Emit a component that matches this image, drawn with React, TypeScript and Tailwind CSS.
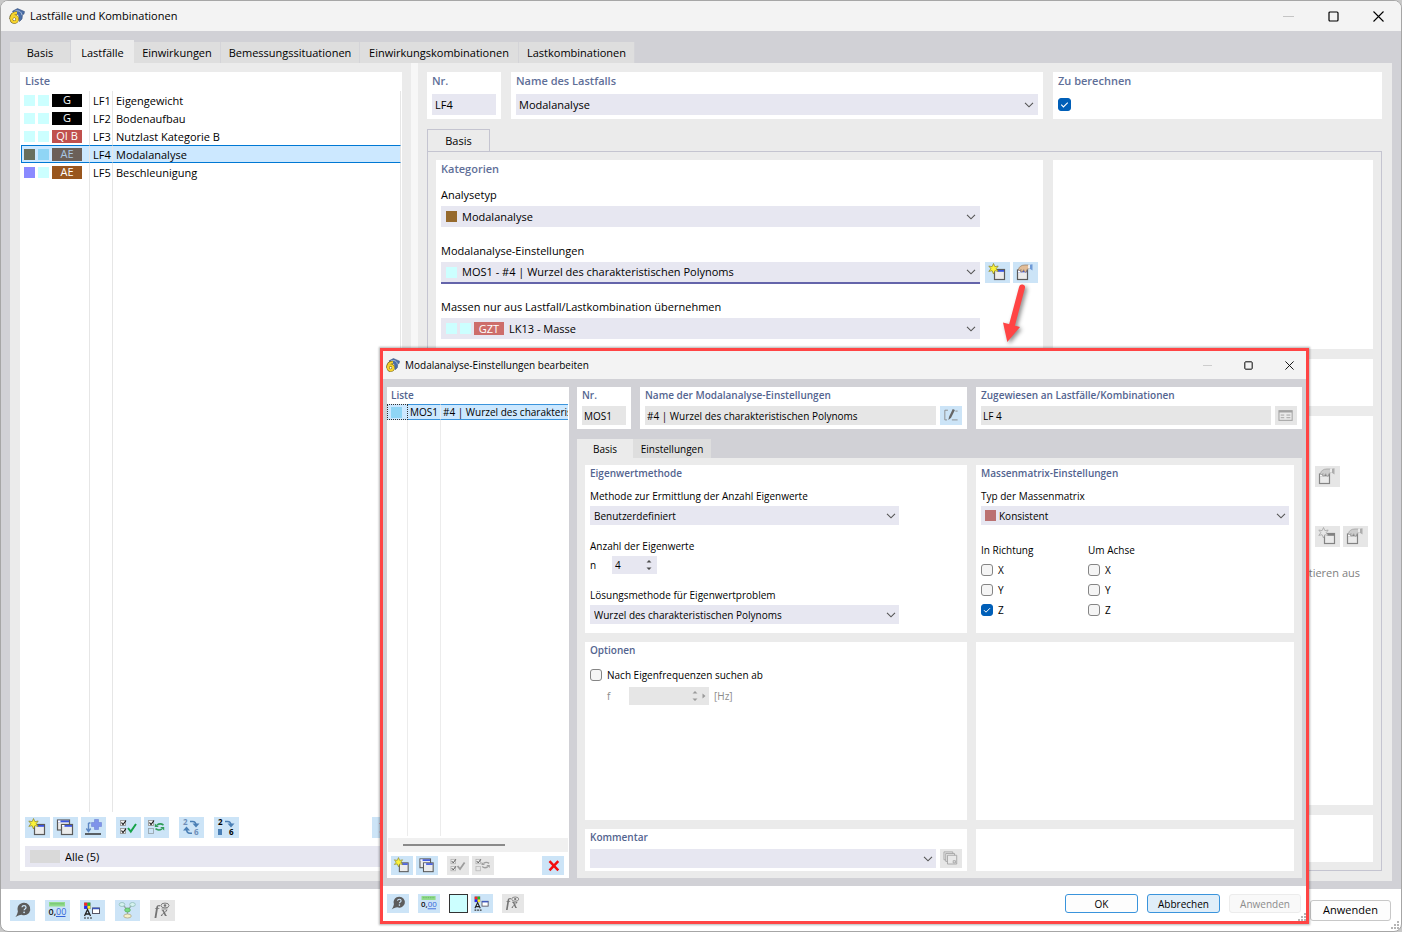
import React, { useState } from 'react';
import clsx from 'clsx';

type IconProps = { className?: string };

const ICON = 'block h-full w-full';

/* ---------- icons ---------- */

function AppLogo({ className }: IconProps) {
  return (
    <svg viewBox="0 0 16 16" className={className} aria-hidden="true">
      <path d="M3.500 3.200 8.500.6l7 3-.6 2.600-1.400.2-.5 4.600-2.500 2.500L9.500 6.500 5 5.500z" fill="#4a6ea8" stroke="#39507a" strokeWidth=".6" />
      <path d="M5.500 3.400c3.500-1.400 7-.2 7.500 3.800" fill="none" stroke="#b9c9e2" strokeWidth=".9" />
      <path d="M8 4.800C4 5 1.900 7.300 1.900 11" fill="none" stroke="#6b5c14" strokeWidth="3.200" />
      <circle cx="5.300" cy="11.200" r="2.900" fill="#fff" stroke="#6b5c14" strokeWidth="3.400" />
      <path d="M8 4.800C4 5 2.200 7.300 2.200 11" fill="none" stroke="#f6d32d" strokeWidth="2.200" />
      <circle cx="5.300" cy="11.200" r="2.900" fill="none" stroke="#f6d32d" strokeWidth="2.400" />
    </svg>
  );
}

function MiniWindow({ x, y, w = 10, h = 10 }: { x: number; y: number; w?: number; h?: number }) {
  return (
    <g>
      <rect x={x} y={y} width={w} height={h} fill="#ececec" stroke="#5a5a5a" strokeWidth="1.200" />
      <rect x={x + 0.5} y={y + 0.5} width={w - 1} height="1.800" fill="#3a55e0" />
      <rect x={x + 0.5} y={y + 0.5} width="2.500" height="1.800" fill="#fff" />
    </g>
  );
}

function NewIcon() {
  return (
    <svg viewBox="0 0 25 21" className={ICON} aria-hidden="true">
      <MiniWindow x={9.5} y={7.5} />
      <path d="M8.500 1.500 9.900 4.700 13.200 4 11.200 6.700 13.200 9.400 9.900 8.700 8.500 12 7.100 8.700 3.800 9.400 5.800 6.700 3.800 4 7.100 4.700z" fill="#fbf33a" stroke="#8a8328" strokeWidth=".7" />
    </svg>
  );
}

function CopyIcon() {
  return (
    <svg viewBox="0 0 25 21" className={ICON} aria-hidden="true">
      <MiniWindow x={4.5} y={3} w={12} />
      <MiniWindow x={8.5} y={7.5} w={11} />
    </svg>
  );
}

function ImportIcon() {
  return (
    <svg viewBox="0 0 25 21" className={ICON} aria-hidden="true">
      <path d="M13.500 2.500h4v3h3v4h-3v3h-4v-3h-3v-4h3z" fill="#7f93ea" stroke="#6277cf" strokeWidth=".5" />
      <path d="M7.500 6v8M5.300 11.500l2.200 3 2.200-3M7.500 6h2" fill="none" stroke="#5b86c4" strokeWidth="1.400" />
      <path d="M4 17h16" stroke="#333" strokeWidth="1.600" />
    </svg>
  );
}

function SmallBox({ y, checked = true }: { y: number; checked?: boolean }) {
  return (
    <g fill="none">
      <rect x="4.500" y={y} width="5" height="5" stroke={checked ? '#999' : '#9aa7b0'} fill={checked ? '#f4f4f4' : 'none'} strokeWidth=".9" />
      {checked && <path d={`M5.500 ${y + 2}l1.500 2 3-4`} stroke="#111" strokeWidth="1.100" />}
    </g>
  );
}

function CheckAllIcon() {
  return (
    <svg viewBox="0 0 25 21" className={ICON} aria-hidden="true">
      <SmallBox y={3.5} />
      <SmallBox y={11.5} />
      <path d="M12 11l2.800 3.500L20 7" fill="none" stroke="#17a34a" strokeWidth="2" />
    </svg>
  );
}

function InvertIcon() {
  return (
    <svg viewBox="0 0 25 21" className={ICON} aria-hidden="true">
      <SmallBox y={3.5} />
      <SmallBox y={11.5} checked={false} />
      <path d="M19.500 8c-2.500-1.600-4.800-1.200-6.500.2M11.500 11.700c2 1.600 4.500 1.500 6.500.1" fill="none" stroke="#2f9d58" strokeWidth="1.600" />
      <path d="M10.800 6.600v3.400h4zM20.200 13.400v-3.400h-4z" fill="#2f9d58" />
    </svg>
  );
}

function RenumberIcon({ single = false }: { single?: boolean }) {
  const ink = single ? '#000' : '#6f8fb8';
  return (
    <svg viewBox="0 0 25 21" className={ICON} aria-hidden="true">
      <text x="4" y="8" fontSize="8" fontWeight="700" fill={ink} fontFamily="Open Sans, sans-serif">2</text>
      <text x="15" y="18" fontSize="8" fontWeight="700" fill={ink} fontFamily="Open Sans, sans-serif">6</text>
      <path d="M11 4.500h2.500c2 0 3.500 1 3.500 4" fill="none" stroke="#4a7fb5" strokeWidth="1.500" />
      <path d="M13.500 6.500h7L17 10.500z" fill="#4a7fb5" />
      {single ? (
        <rect x="4" y="12" width="4" height="6" fill="#4a7fb5" />
      ) : (
        <>
          <path d="M7.500 12c0 3 1.500 4.200 3.500 4.200h2" fill="none" stroke="#4a7fb5" strokeWidth="1.500" />
          <path d="M4 13.500h7L7.500 9.500z" fill="#4a7fb5" />
        </>
      )}
    </svg>
  );
}

function HelpIcon() {
  return (
    <svg viewBox="0 0 25 21" className={ICON} aria-hidden="true">
      <path d="M14 2.800a6.200 6.200 0 1 1-2.300 11.900C9.500 15 7.500 15.800 5.300 17.200c1.300-1.700 2.200-3.400 2.600-6A6.200 6.200 0 0 1 14 2.800z" fill="#5c5c5c" />
      <path d="M12 7.300c.2-2.200 4-2.200 4 .1 0 1.500-1.900 1.500-1.900 2.900" fill="none" stroke="#cce4f7" strokeWidth="1.300" />
      <circle cx="14.100" cy="12.300" r=".9" fill="#cce4f7" />
    </svg>
  );
}

function DecimalsIcon() {
  return (
    <svg viewBox="0 0 25 21" className={ICON} aria-hidden="true">
      <rect x="4" y="2" width="16" height="4.500" fill="#92dc8c" />
      <path d="M6 3v1.500M8 3v1.500M10 3v1.500M12 3v1.500M14 3v1.500M16 3v1.500M18 3v1.500" stroke="#5aa85a" strokeWidth=".7" />
      <text x="3.500" y="15" fontSize="9" fontWeight="600" fill="#111" fontFamily="Open Sans, sans-serif">0,</text>
      <text x="11" y="15" fontSize="9" fill="#3564d8" fontFamily="Open Sans, sans-serif">00</text>
      <path d="M11 16.500h9.500" stroke="#3564d8" strokeWidth="1" />
    </svg>
  );
}

function DisplayIcon() {
  return (
    <svg viewBox="0 0 25 21" className={ICON} aria-hidden="true">
      <path d="M4 2.500h6.500V9H4z" fill="#777" />
      <path d="M4.300 2.800h2.900v2.800H4.300z" fill="#f22" />
      <path d="M7.600 2.800h2.600v2.800H7.600z" fill="#2b2" />
      <path d="M4.300 6h2.900v2.700H4.300z" fill="#22f" />
      <path d="M7.600 6h2.600v2.700H7.600z" fill="#fe2" />
      <path d="M4.500 16 7.500 9.500l3 6.500M5.500 14h4" fill="none" stroke="#222" strokeWidth="1.300" />
      <path d="M4 18h8" stroke="#333" strokeWidth="1.200" strokeDasharray="2 1" />
      <rect x="12.500" y="8" width="7" height="5.500" fill="#fff" stroke="#556" strokeWidth="1" />
      <path d="M12.500 8.500h7" stroke="#3a55c0" strokeWidth="1.500" />
    </svg>
  );
}

function TreeIcon() {
  return (
    <svg viewBox="0 0 25 21" className={ICON} aria-hidden="true">
      <path d="M8 5l4.500 5L17 5M12.500 10v6" fill="none" stroke="#98a8a8" strokeWidth="1.300" />
      <ellipse cx="7" cy="4.500" rx="2.800" ry="2" fill="#d4f2ee" stroke="#8fbcb8" strokeWidth=".8" />
      <ellipse cx="17.500" cy="4.500" rx="2.800" ry="2" fill="#d4f2ee" stroke="#8fbcb8" strokeWidth=".8" />
      <ellipse cx="12.500" cy="10" rx="2.800" ry="2" fill="#79dd83" stroke="#5cae64" strokeWidth=".8" />
      <ellipse cx="12.500" cy="16" rx="3.800" ry="2" fill="#f5f0c8" stroke="#a9a688" strokeWidth=".8" />
    </svg>
  );
}

function FormulaIcon() {
  return (
    <svg viewBox="0 0 25 21" className={ICON} aria-hidden="true">
      <text x="4.500" y="15" fontSize="14" fontStyle="italic" fontWeight="700" fill="#444" fontFamily="Liberation Serif, serif">f</text>
      <text x="11" y="16" fontSize="13" fontStyle="italic" fontWeight="700" fill="#444" fontFamily="Liberation Serif, serif">x</text>
      <ellipse cx="15" cy="5.500" rx="4" ry="2.400" fill="none" stroke="#444" strokeWidth=".9" />
      <circle cx="15" cy="5.500" r="1.300" fill="#444" />
      <path d="M11.500 9h6" stroke="#444" strokeWidth=".8" />
    </svg>
  );
}

function EditWindowIcon() {
  return (
    <svg viewBox="0 0 25 21" className={ICON} aria-hidden="true">
      <MiniWindow x={4.5} y={8} w={10} h={9.5} />
      <path d="M5.500 7.500C6 4.500 8.500 3 12 3h3.500l.8 3.500-2 .6-1.300 3.200-1.500-.6-.8-2-1.500 2.300-1.500-.4L8 7.500 6.500 9z" fill="#e2bd98" stroke="#8f7760" strokeWidth=".7" />
      <path d="M16.500 2.800 19.500 2.200v6.200l-3-2z" fill="#6f9ad6" />
      <path d="M15.200 3h1.600v3.600h-1.600z" fill="#fff" />
    </svg>
  );
}

function RenameIcon() {
  return (
    <svg viewBox="0 0 25 21" className={ICON} aria-hidden="true">
      <path d="M9 4.500H5.500v11H8M13.500 15.500H20M17.500 5.500H20" fill="none" stroke="#888" strokeWidth="1" />
      <path d="M9.500 15.500l.8-3.500L14.500 3l2.500 1.200L12.600 13z" fill="#666" />
    </svg>
  );
}

function DetailsIcon() {
  return (
    <svg viewBox="0 0 25 21" className={ICON} aria-hidden="true">
      <rect x="4.500" y="5" width="15" height="11" fill="#ececec" stroke="#888" strokeWidth="1.200" />
      <path d="M4.500 6h15" stroke="#888" strokeWidth="2.200" />
      <path d="M6.500 10h4M6.500 13h4M13 10h4.500M13 13h4.500" stroke="#888" strokeWidth="1.100" />
    </svg>
  );
}

function StackIcon() {
  return (
    <svg viewBox="0 0 25 21" className={ICON} aria-hidden="true">
      <g fill="#e9e9e9" stroke="#888" strokeWidth="1">
        <path d="M4.500 3h10v9h-10z" />
        <path d="M6.500 4.800h10v9h-10z" />
        <path d="M8.500 6.800h10.500v10H8.500z" />
        <path d="M15 13h2.500v2.500H15z" />
      </g>
    </svg>
  );
}

function DeleteIcon() {
  return (
    <svg viewBox="0 0 25 21" className={ICON} aria-hidden="true">
      <path d="M8.500 5.500l10 10.500M18.500 5.500L8.500 16" stroke="#f40d0d" strokeWidth="2.800" />
    </svg>
  );
}

/* ---------- controls ---------- */

interface IconButtonProps {
  label: string;
  children: React.ReactNode;
  disabled?: boolean;
  small?: boolean;
  className?: string;
}

function IconButton({ label, children, disabled, small, className }: IconButtonProps) {
  return (
    <button
      type="button"
      aria-label={label}
      disabled={disabled}
      className={clsx(
        'shrink-0',
        small ? 'h-[19px] w-[22px]' : 'h-[21px] w-[25px]',
        disabled ? 'bg-[#e6e6e6]' : 'bg-[#cce4f7] hover:bg-[#b5d8f3]',
        className
      )}
    >
      <span className={clsx('block h-full w-full', disabled && 'opacity-70 grayscale')}>{children}</span>
    </button>
  );
}

function Chevron() {
  return (
    <svg viewBox="0 0 10 6" className="pointer-events-none h-1.5 w-2.5 shrink-0" aria-hidden="true">
      <path d="M1 .8l4 4 4-4" fill="none" stroke="#555" strokeWidth="1.100" />
    </svg>
  );
}

interface SelectBoxProps {
  id: string;
  value: string;
  label?: string;
  small?: boolean;
  active?: boolean;
  children?: React.ReactNode;
  className?: string;
}

function SelectBox({ id, value, label, small, active, children, className }: SelectBoxProps) {
  return (
    <div
      className={clsx(
        'flex items-center bg-[#e7e7f1]',
        small ? 'h-[19px] pr-[3px] pl-1' : 'pr-1',
        !small && (children ? 'pl-[5px]' : 'pl-[3px]'),
        !small && (active ? 'h-[22px] border-b-2 border-[#6464aa]' : 'h-[21px]'),
        children && 'gap-[3px]',
        className
      )}
    >
      {children}
      <select
        id={id}
        aria-label={label}
        className={clsx('h-full min-w-0 flex-1 appearance-none bg-transparent outline-none', children && !small && 'pl-0.5')}
      >
        <option>{value}</option>
      </select>
      <Chevron />
    </div>
  );
}

function CheckBox({ id, checked = false, small, label }: { id: string; checked?: boolean; small?: boolean; label?: string }) {
  const [on, setOn] = useState(checked);
  return (
    <span className={clsx('grid shrink-0', small ? 'size-3' : 'size-[13px]')}>
      <input
        id={id}
        type="checkbox"
        aria-label={label}
        checked={on}
        onChange={() => setOn(!on)}
        className={clsx(
          'col-start-1 row-start-1 size-full appearance-none rounded-[3px] border',
          on ? 'border-[#005fb8] bg-[#005fb8]' : 'border-[#858585] bg-[#f5f5f5]'
        )}
      />
      {on && (
        <svg viewBox="0 0 12 12" className="pointer-events-none col-start-1 row-start-1 size-full" aria-hidden="true">
          <path d="M3 6.200l2 2 4-4" fill="none" stroke="#fff" strokeWidth="1" />
        </svg>
      )}
    </span>
  );
}

function Swatch({ className }: IconProps) {
  return <span className={clsx('block size-[11px] shrink-0', className)} />;
}

function Spinner({ disabled, more }: { disabled?: boolean; more?: boolean }) {
  return (
    <svg viewBox="0 0 16 16" className={clsx('h-4 w-4 shrink-0', more ? 'mr-0.5' : '-mr-1')} aria-hidden="true">
      <path d="M1.500 5.500h5L4 3zM1.500 10.500h5L4 13z" fill={disabled ? '#9a9a9a' : '#4a4a4a'} />
      {more && <path d="M11.500 5.500v5l3-2.500z" fill="#9a9a9a" />}
    </svg>
  );
}

function Card({ title, small, children, className }: { title?: string; small?: boolean; children?: React.ReactNode; className?: string }) {
  return (
    <section className={clsx('min-w-0 bg-white px-[5px]', className)}>
      {title && (
        <h2
          className={clsx(
            'whitespace-nowrap',
            small ? 'h-[17px] leading-4 font-[560] text-[#53648f]' : 'h-[18px] leading-[18px] font-semibold text-[#5f6f98]'
          )}
        >
          {title}
        </h2>
      )}
      {children}
    </section>
  );
}

function WindowTitle({ title, small }: { title: string; small?: boolean }) {
  const btn = clsx('grid h-full place-items-center', small ? 'w-8' : 'w-9');
  const size = small ? 'size-[9px]' : 'size-[11px]';
  return (
    <header className={clsx('flex shrink-0 items-center bg-[#f3f3f3]', small ? 'h-7 pr-px pl-[3px]' : 'h-[30px] pr-[5px] pl-2')}>
      <AppLogo className={small ? 'mr-[5px] size-3.5' : 'mr-[5px] size-4'} />
      <h1 className="flex-1">{title}</h1>
      <div className="flex h-full gap-[9px]">
        <button type="button" aria-label="Minimieren" className={btn}>
          <svg viewBox="0 0 11 11" className={size}>
            <path d="M0 5.500h11" stroke="#c4c4c4" />
          </svg>
        </button>
        <button type="button" aria-label="Maximieren" className={btn}>
          <svg viewBox="0 0 11 11" className={size}>
            <rect x="1" y="1" width="9" height="9" rx="1" fill="none" stroke="#000" strokeWidth="1.200" />
          </svg>
        </button>
        <button type="button" aria-label="Schließen" className={btn}>
          <svg viewBox="0 0 11 11" className={size}>
            <path d="M.5.5l10 10M10.500.5l-10 10" stroke="#000" strokeWidth="1.100" />
          </svg>
        </button>
      </div>
    </header>
  );
}

function ResizeGrip({ className }: IconProps) {
  return (
    <svg viewBox="0 0 8 8" className={clsx('size-2', className)} aria-hidden="true">
      <path d="M6 0h2v2H6zM3 3h2v2H3zM6 3h2v2H6zM0 6h2v2H0zM3 6h2v2H3zM6 6h2v2H6z" fill="#b5b5b5" />
    </svg>
  );
}

/* ---------- load case list ---------- */

const loadCases = [
  { no: 'LF1', name: 'Eigengewicht', badge: 'G', a: 'bg-[#ccffff]', b: 'bg-[#ccffff]', tag: 'bg-black text-white' },
  { no: 'LF2', name: 'Bodenaufbau', badge: 'G', a: 'bg-[#ccffff]', b: 'bg-[#ccffff]', tag: 'bg-black text-white' },
  { no: 'LF3', name: 'Nutzlast Kategorie B', badge: 'QI B', a: 'bg-[#ccffff]', b: 'bg-[#ccffff]', tag: 'bg-[#c0504d] text-white' },
  { no: 'LF4', name: 'Modalanalyse', badge: 'AE', a: 'bg-[#686f5e]', b: 'bg-[#8fd5f5]', tag: 'bg-[#6b5f58] text-[#a9c8e4]', selected: true },
  { no: 'LF5', name: 'Beschleunigung', badge: 'AE', a: 'bg-[#8a8aff]', b: 'bg-[#ccffff]', tag: 'bg-[#99561e] text-white' },
];

function LoadCaseList() {
  return (
    <section className="flex w-[382px] shrink-0 flex-col bg-white">
      <h2 className="h-[19px] pl-[5px] leading-[18px] font-semibold text-[#5f6f98]">Liste</h2>
      <div className="min-h-0 flex-1 pr-px pl-px">
        <table className="h-full w-full table-fixed border-separate border-spacing-0">
          <colgroup>
            <col className="w-[69px]" />
            <col className="w-[23px]" />
            <col />
          </colgroup>
          <tbody>
            {loadCases.map((lc) => {
              const cell = lc.selected
                ? 'border-y border-y-[#0078d4] bg-[#cce8ff] border-r border-r-[#e6e6e6]'
                : 'border-r border-r-[#e6e6e6]';
              return (
                <tr key={lc.no} className="h-[18px]">
                  <td className={clsx('h-[18px] p-0', cell, lc.selected ? 'border-l border-l-[#0078d4] pl-0.5' : 'pl-[3px]')}>
                    <div className="flex items-center gap-[3px]">
                      <Swatch className={lc.a} />
                      <Swatch className={lc.b} />
                      <span className={clsx('h-[13px] w-[30px] text-center leading-3', lc.tag)}>{lc.badge}</span>
                    </div>
                  </td>
                  <td className={clsx('h-[18px] p-0 pl-[3px]', cell)}>
                    <span className="block h-4 pt-px">{lc.no}</span>
                  </td>
                  <td className={clsx('h-[18px] p-0 pl-[3px]', cell)}>
                    <span className="block h-4 pt-px">{lc.name}</span>
                  </td>
                </tr>
              );
            })}
            <tr>
              <td className="border-r border-[#e6e6e6]" />
              <td className="border-r border-[#e6e6e6]" />
              <td className="border-r border-[#e6e6e6]" />
            </tr>
          </tbody>
        </table>
      </div>
      <div className="mt-[5px] flex gap-[3px] px-[5px]">
        <IconButton label="Neu"><NewIcon /></IconButton>
        <IconButton label="Kopieren"><CopyIcon /></IconButton>
        <IconButton label="Importieren"><ImportIcon /></IconButton>
        <IconButton label="Alle auswählen" className="ml-[7px]"><CheckAllIcon /></IconButton>
        <IconButton label="Auswahl umkehren"><InvertIcon /></IconButton>
        <IconButton label="Neu nummerieren" className="ml-[7px]"><RenumberIcon /></IconButton>
        <IconButton label="Nummer zuweisen" className="ml-[7px]"><RenumberIcon single /></IconButton>
        <IconButton label="Löschen" className="ml-auto"><DeleteIcon /></IconButton>
      </div>
      <SelectBox id="filter" value="Alle (5)" label="Filter" className="mx-[5px] mt-2 mb-1">
        <span className="h-[13px] w-[30px] bg-[#d9d9d9]" />
      </SelectBox>
    </section>
  );
}

/* ---------- main window ---------- */

const mainTabs = [
  { name: 'Basis', width: 'w-[61px]' },
  { name: 'Lastfälle', width: 'w-[63px]' },
  { name: 'Einwirkungen', width: 'w-[87px]' },
  { name: 'Bemessungssituationen', width: 'w-[139px]' },
  { name: 'Einwirkungskombinationen', width: 'w-[159px]' },
  { name: 'Lastkombinationen', width: 'w-[116px]' },
];

function LoadCaseDetails() {
  return (
    <div className="flex min-w-0 flex-1 flex-col">
      <div className="grid grid-cols-[74px_532fr_329fr] gap-2.5">
        <Card title="Nr." className="pb-1">
          <input aria-label="Nr." readOnly defaultValue="LF4" className="mt-1 block h-[21px] w-full bg-[#e7e7f1] px-[3px]" />
        </Card>
        <Card title="Name des Lastfalls" className="pb-1">
          <SelectBox id="case-name" label="Name des Lastfalls" value="Modalanalyse" className="mt-1" />
        </Card>
        <Card title="Zu berechnen">
          <div className="mt-2">
            <CheckBox id="calc" checked label="Zu berechnen" />
          </div>
        </Card>
      </div>

      <div role="tablist" className="mt-2.5 flex">
        <button type="button" role="tab" aria-selected="true" className="-mb-px h-[23px] w-[63px] border border-b-0 border-[#c4c4d0] bg-[#ebebeb]">
          Basis
        </button>
      </div>
      <div className="grid min-h-0 flex-1 grid-cols-[607fr_320fr] grid-rows-[189px_47px_minmax(0,1fr)_47px] gap-2.5 border border-[#c4c4d0] p-2">
        <Card title="Kategorien">
          <label htmlFor="analysis-type" className="mt-[9px] block h-4 leading-4">Analysetyp</label>
          <SelectBox id="analysis-type" value="Modalanalyse" className="mt-[3px] mr-[58px]">
            <Swatch className="bg-[#966a2d]" />
          </SelectBox>
          <label htmlFor="modal-settings" className="mt-4 block h-4 leading-4">Modalanalyse-Einstellungen</label>
          <div className="mt-[3px] flex items-start">
            <SelectBox id="modal-settings" value="MOS1 - #4 | Wurzel des charakteristischen Polynoms" active className="mr-[5px] flex-1">
              <Swatch className="bg-[#ccffff]" />
            </SelectBox>
            <IconButton label="Neue Einstellungen" className="mr-[3px]"><NewIcon /></IconButton>
            <IconButton label="Einstellungen bearbeiten"><EditWindowIcon /></IconButton>
          </div>
          <label htmlFor="mass-source" className="mt-[15px] block h-4 leading-4">Massen nur aus Lastfall/Lastkombination übernehmen</label>
          <SelectBox id="mass-source" value="LK13 - Masse" className="mt-[3px] mr-[58px]">
            <Swatch className="bg-[#ccffff]" />
            <Swatch className="bg-[#ccffff]" />
            <span className="h-[13px] w-[30px] bg-[#cd6d6a] text-center leading-[13px] text-white">GZT</span>
          </SelectBox>
        </Card>
        <Card />
        <Card />
        <Card />
        <Card />
        <Card className="flex flex-col items-end">
          <IconButton label="Bearbeiten" disabled className="mt-[50px] mr-7"><EditWindowIcon /></IconButton>
          <div className="mt-[39px] flex gap-[3px]">
            <IconButton label="Neu" disabled><NewIcon /></IconButton>
            <IconButton label="Bearbeiten" disabled><EditWindowIcon /></IconButton>
          </div>
          <p className="mt-[18px] mr-2 text-[#808080]">tieren aus</p>
        </Card>
        <Card />
        <Card />
      </div>
    </div>
  );
}

/* ---------- settings dialog ---------- */

function SettingsList() {
  const line = 'border-r border-r-[#ececec]';
  return (
    <section className="flex w-[182px] shrink-0 flex-col bg-white">
      <h2 className="h-[17px] pl-1 leading-4 font-[560] text-[#53648f]">Liste</h2>
      <div className="min-h-0 flex-1 pr-px">
        <table className="h-full w-full table-fixed border-separate border-spacing-0">
          <colgroup>
            <col className="w-[21px]" />
            <col className="w-[33px]" />
            <col />
          </colgroup>
          <tbody>
            <tr className="h-4">
              <td className="h-4 border border-dotted border-[#333] bg-[#cce8ff] p-0 pl-[3px]">
                <Swatch className="bg-[#8fd5f5]" />
              </td>
              <td className={clsx('h-4 border-y border-y-[#3a94dc] bg-[#cce8ff] p-0 pl-0.5 leading-[14px]', line)}>MOS1</td>
              <td className="h-4 overflow-hidden border-y border-y-[#3a94dc] bg-[#cce8ff] p-0 pl-0.5 leading-[14px] whitespace-nowrap">
                #4 | Wurzel des charakteristischen Polynoms
              </td>
            </tr>
            <tr>
              <td className={line} />
              <td className={line} />
              <td />
            </tr>
          </tbody>
        </table>
      </div>
      <div className="mx-px mt-0.5 h-3.5 bg-[#f0f0f0] pt-1.5">
        <div className="ml-[15px] h-0.5 w-[102px] bg-[#8a8a8a]" />
      </div>
      <div className="flex gap-[3px] pt-1 pr-[5px] pb-[3px] pl-1">
        <IconButton small label="Neu"><NewIcon /></IconButton>
        <IconButton small label="Kopieren"><CopyIcon /></IconButton>
        <IconButton small label="Alle auswählen" disabled className="ml-1.5"><CheckAllIcon /></IconButton>
        <IconButton small label="Auswahl umkehren" disabled><InvertIcon /></IconButton>
        <IconButton small label="Löschen" className="ml-auto"><DeleteIcon /></IconButton>
      </div>
    </section>
  );
}

function AxisChecks({ title, group, checked }: { title: string; group: string; checked?: string }) {
  return (
    <fieldset className="w-[107px]">
      <legend className="h-4 leading-4">{title}</legend>
      {['X', 'Y', 'Z'].map((axis) => (
        <div key={axis} className="flex h-5 items-center gap-[5px] first-of-type:mt-0.5">
          <CheckBox small id={`${group}-${axis}`} checked={axis === checked} />
          <label htmlFor={`${group}-${axis}`}>{axis}</label>
        </div>
      ))}
    </fieldset>
  );
}

function SettingsDialog() {
  const [tab, setTab] = useState('Basis');
  return (
    <div
      role="dialog"
      aria-label="Modalanalyse-Einstellungen bearbeiten"
      className="absolute top-[347px] right-[92px] bottom-[7px] left-[379px] flex flex-col border-[3px] border-[#ff4444] bg-white text-[10px] shadow-[0_0_2px_1px_rgba(0,0,0,0.3)]"
    >
      <WindowTitle small title="Modalanalyse-Einstellungen bearbeiten" />
      <div className="flex min-h-0 flex-1 gap-2 bg-[#d1d1d6] pt-2 pr-1 pb-2 pl-1">
        <SettingsList />
        <div className="flex min-w-0 flex-1 flex-col">
          <div className="grid grid-cols-[54px_327fr_326fr] gap-[9px]">
            <Card small title="Nr." className="pb-1">
              <input aria-label="Nr." readOnly defaultValue="MOS1" className="mt-0.5 block h-[19px] w-full bg-[#e6e6e6] px-0.5" />
            </Card>
            <Card small title="Name der Modalanalyse-Einstellungen" className="pb-1">
              <div className="mt-0.5 flex gap-1">
                <input
                  aria-label="Name der Modalanalyse-Einstellungen"
                  readOnly
                  defaultValue="#4 | Wurzel des charakteristischen Polynoms"
                  className="h-[19px] min-w-0 flex-1 bg-[#e6e6e6] px-0.5"
                />
                <IconButton small label="Name bearbeiten"><RenameIcon /></IconButton>
              </div>
            </Card>
            <Card small title="Zugewiesen an Lastfälle/Kombinationen" className="pb-1">
              <div className="mt-0.5 flex gap-1">
                <input aria-label="Zugewiesen an" readOnly defaultValue="LF 4" className="h-[19px] min-w-0 flex-1 bg-[#e6e6e6] px-0.5" />
                <IconButton small label="Details" disabled><DetailsIcon /></IconButton>
              </div>
            </Card>
          </div>

          <div role="tablist" className="mt-2.5 flex h-[19px]">
            {['Basis', 'Einstellungen'].map((name) => (
              <button
                key={name}
                type="button"
                role="tab"
                aria-selected={tab === name}
                onClick={() => setTab(name)}
                className={clsx(name === 'Basis' ? 'w-14' : 'w-[78px]', tab === name ? 'bg-[#ebebeb]' : 'bg-[#dedede]')}
              >
                {name}
              </button>
            ))}
          </div>

          <div className="grid min-h-0 flex-1 grid-cols-[382fr_318fr] grid-rows-[168px_minmax(0,1fr)_42px] gap-[9px] bg-[#ebebeb] px-2 py-[7px]">
            <Card small title="Eigenwertmethode">
              <label htmlFor="count-method" className="mt-1.5 block h-4 leading-4">Methode zur Ermittlung der Anzahl Eigenwerte</label>
              <SelectBox small id="count-method" value="Benutzerdefiniert" className="mt-0.5 w-[309px]" />
              <label htmlFor="count" className="mt-[13px] block h-4 leading-4">Anzahl der Eigenwerte</label>
              <div className="mt-0.5 flex items-center">
                <span className="w-[22px]">n</span>
                <div className="flex h-[18px] w-[45px] items-center bg-[#e7e7f1] pl-[3px]">
                  <input id="count" defaultValue="4" className="min-w-0 flex-1 bg-transparent outline-none" />
                  <Spinner />
                </div>
              </div>
              <label htmlFor="solver" className="mt-[13px] block h-4 leading-4">Lösungsmethode für Eigenwertproblem</label>
              <SelectBox small id="solver" value="Wurzel des charakteristischen Polynoms" className="mt-0.5 w-[309px]" />
            </Card>
            <Card small title="Massenmatrix-Einstellungen">
              <label htmlFor="matrix-type" className="mt-1.5 block h-4 leading-4">Typ der Massenmatrix</label>
              <SelectBox small id="matrix-type" value="Konsistent" className="mt-0.5">
                <Swatch className="bg-[#bb7171]" />
              </SelectBox>
              <div className="mt-[17px] flex">
                <AxisChecks title="In Richtung" group="dir" checked="Z" />
                <AxisChecks title="Um Achse" group="rot" />
              </div>
            </Card>
            <Card small title="Optionen">
              <div className="mt-2 flex h-4 items-center gap-[5px]">
                <CheckBox small id="search-from" />
                <label htmlFor="search-from">Nach Eigenfrequenzen suchen ab</label>
              </div>
              <div className="mt-1 flex items-center pl-[17px] text-[#8c8c8c]">
                <label htmlFor="freq" className="w-[22px]">f</label>
                <div className="flex h-[18px] w-20 items-center bg-[#e6e6e6]">
                  <input id="freq" disabled className="min-w-0 flex-1 bg-transparent" />
                  <Spinner disabled more />
                </div>
                <span className="ml-[5px]">[Hz]</span>
              </div>
            </Card>
            <Card />
            <Card small title="Kommentar">
              <div className="mt-[3px] flex gap-1">
                <SelectBox small id="comment" value="" label="Kommentar" className="flex-1" />
                <IconButton small label="Vorlagen" disabled><StackIcon /></IconButton>
              </div>
            </Card>
            <Card />
          </div>
        </div>
      </div>
      <footer className="relative flex h-[35px] shrink-0 items-center pr-[5px] pl-1">
        <IconButton small label="Hilfe"><HelpIcon /></IconButton>
        <IconButton small label="Einheiten" className="ml-[9px]"><DecimalsIcon /></IconButton>
        <button type="button" aria-label="Farbe" className="ml-[9px] size-[19px] border border-[#333] bg-[#ccffff]" />
        <IconButton small label="Anzeige" className="ml-[3px]"><DisplayIcon /></IconButton>
        <IconButton small label="Formel" disabled className="ml-[9px]"><FormulaIcon /></IconButton>
        <div className="ml-auto flex gap-[9px]">
          <button type="button" className="h-[19px] w-[73px] rounded-[3px] border border-[#3a94dc] bg-[#fdfdfd]">OK</button>
          <button type="button" className="h-[19px] w-[73px] rounded-[3px] border border-[#3a94dc] bg-[#e0eef9]">Abbrechen</button>
          <button type="button" disabled className="h-[19px] w-[72px] rounded-[3px] border border-[#ececec] bg-[#f9f9f9] text-[#8c8c8c]">Anwenden</button>
        </div>
        <ResizeGrip className="absolute right-0 bottom-0" />
      </footer>
    </div>
  );
}

/* Callout arrow from the edit button to the dialog */
function CalloutArrow() {
  return (
    <svg viewBox="0 0 32 66" className="pointer-events-none absolute top-[280px] left-[997px] h-[66px] w-8 drop-shadow-[2px_2px_2px_rgba(0,0,0,0.45)]" aria-hidden="true">
      <path d="M24 6.500L14 44" stroke="#ff4444" strokeWidth="6" strokeLinecap="round" />
      <path d="M5 41.500L22 46 9.300 61z" fill="#ff4444" />
    </svg>
  );
}

export default function App() {
  const [tab, setTab] = useState('Lastfälle');
  return (
    <div className="h-screen bg-[#c8c8c8] font-['Open_Sans','Noto_Sans',sans-serif] text-[11px] leading-4 text-black">
      <div className="relative flex h-full flex-col overflow-hidden rounded-lg border border-[#a6a6a6] bg-white">
        <WindowTitle title="Lastfälle und Kombinationen" />
        <main className="flex min-h-0 flex-1 flex-col bg-[#d1d1d6] px-[9px] pt-[9px] pb-2">
          <div role="tablist" className="flex h-[23px] items-end">
            {mainTabs.map((t) => (
              <button
                key={t.name}
                type="button"
                role="tab"
                aria-selected={tab === t.name}
                onClick={() => setTab(t.name)}
                className={clsx(
                  'whitespace-nowrap',
                  t.width,
                  tab === t.name ? 'h-[23px] bg-[#ebebeb] pt-0.5' : 'h-[21px] border-r border-[#d4d4d8] bg-[#dedede]'
                )}
              >
                {t.name}
              </button>
            ))}
          </div>
          <div className="flex min-h-0 flex-1 gap-[9px] bg-[#ebebeb] px-2.5">
            <div className="flex pt-[9px] pb-2.5">
              <LoadCaseList />
            </div>
            <div className="w-[7px] bg-[#f7f7f7]" />
            <div className="flex min-w-0 flex-1 pt-[9px] pb-2.5">
              <LoadCaseDetails />
            </div>
          </div>
        </main>
        <footer className="relative flex h-[42px] shrink-0 items-center gap-2.5 px-[9px]">
          <IconButton label="Hilfe"><HelpIcon /></IconButton>
          <IconButton label="Einheiten"><DecimalsIcon /></IconButton>
          <IconButton label="Anzeige"><DisplayIcon /></IconButton>
          <IconButton label="Struktur"><TreeIcon /></IconButton>
          <IconButton label="Formel" disabled><FormulaIcon /></IconButton>
          <button type="button" className="mr-px ml-auto h-[21px] w-[81px] rounded-[3px] border border-[#c8c8c8] bg-[#fdfdfd]">
            Anwenden
          </button>
          <ResizeGrip className="absolute right-0.5 bottom-0.5" />
        </footer>
        <CalloutArrow />
        <SettingsDialog />
      </div>
    </div>
  );
}
